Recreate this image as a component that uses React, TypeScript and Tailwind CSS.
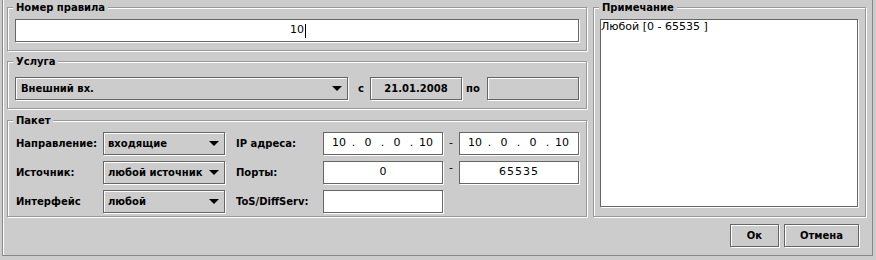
import React from "react";

const boxWhite = "border border-[#666666] bg-white shadow-[1px_1px_0_#ffffff]";
const boxGray =
  "border border-[#666666] bg-[#cccccc] shadow-[1px_1px_0_#ffffff,inset_1px_1px_0_#ffffff]";

function Group({
  title,
  className = "",
  children,
}: {
  title: string;
  className?: string;
  children: React.ReactNode;
}) {
  return (
    <fieldset
      className={
        "min-w-0 border border-[#999999] shadow-[1px_1px_0_#ffffff,inset_1px_1px_0_#ffffff] " +
        className
      }
    >
      <legend className="ml-[5px] px-[3px] bg-[#cccccc] text-[10px] leading-[13px] font-bold">
        {title}
      </legend>
      {children}
    </fieldset>
  );
}

function Arrow() {
  return (
    <svg width="10" height="5" viewBox="0 0 10 5" className="shrink-0">
      <polygon points="0,0 10,0 5,5" fill="#000000" />
    </svg>
  );
}

function Combo({ value, className = "" }: { value: string; className?: string }) {
  return (
    <div
      className={
        boxGray +
        " h-[23px] flex items-center justify-between pl-[4px] pr-[5px] text-[10px] font-bold " +
        className
      }
    >
      <span className="whitespace-nowrap">{value}</span>
      <Arrow />
    </div>
  );
}

function IpField({ parts }: { parts: string[] }) {
  return (
    <div className={boxWhite + " h-[23px] flex items-center pl-[4px] text-[11px]"}>
      {parts.map((p, i) => (
        <React.Fragment key={i}>
          {i > 0 && <span className="w-[7px] text-center">.</span>}
          <span className="w-[22px] text-center">{p}</span>
        </React.Fragment>
      ))}
    </div>
  );
}

function Label({ children, className = "" }: { children: React.ReactNode; className?: string }) {
  return (
    <span className={"text-[10px] font-bold whitespace-nowrap " + className}>{children}</span>
  );
}

export default function App() {
  const ip = ["10", "0", "0", "10"];

  return (
    <div className="w-[876px] h-[260px] bg-[#cccccc] pl-[2px] pr-[3px] text-black font-['DejaVu_Sans',sans-serif]">
      <div className="h-[256px] flex flex-col border-l border-r border-b border-[#888888] shadow-[inset_1px_0_0_#ffffff] pl-[4px] pr-[6px] pt-[1px] pb-[8px]">
        {/* top row: form groups + note */}
        <div className="flex gap-[6px]">
          <div className="w-[580px] flex flex-col">
            <Group title="Номер правила">
              <div className="px-[7px] pt-[5px] pb-[8px]">
                <div className={boxWhite + " h-[23px] flex items-center justify-center text-[11px]"}>
                  <span>10</span>
                  <span className="ml-[1px] -mr-[2px] w-[1px] h-[14px] bg-black" />
                </div>
              </div>
            </Group>

            <Group title="Услуга" className="mt-[4px]">
              <div className="px-[7px] pt-[9px] pb-[8px] flex items-center">
                <Combo value="Внешний вх." className="w-[333px] pl-[5px] pr-[3px]" />
                <Label className="w-[22px] pl-[10px]">с</Label>
                <div className={boxGray + " w-[92px] h-[23px] flex items-center justify-center text-[10px] font-bold"}>
                  21.01.2008
                </div>
                <Label className="w-[25px] pl-[4px]">по</Label>
                <div className={boxGray + " w-[92px] h-[23px]"} />
              </div>
            </Group>

            <Group title="Пакет" className="mt-[5px]">
              <div className="px-[7px] pt-[5px] pb-[3px] grid grid-cols-[88px_122px_98px_120px_16px_120px] gap-y-[6px] items-center">
                <Label className="pl-[1px]">Направление:</Label>
                <Combo value="входящие" />
                <Label className="pl-[11px]">IP адреса:</Label>
                <IpField parts={ip} />
                <span className="text-[11px] text-center">-</span>
                <IpField parts={ip} />

                <Label className="pl-[1px]">Источник:</Label>
                <Combo value="любой источник" />
                <Label className="pl-[11px]">Порты:</Label>
                <div className={boxWhite + " h-[23px] flex items-center justify-center text-[11px]"}>0</div>
                <span className="self-start -mt-[1px] text-[11px] text-center">-</span>
                <div className={boxWhite + " h-[23px] flex items-center justify-center text-[11px] tracking-[1px]"}>
                  65535
                </div>

                <Label className="pl-[1px]">Интерфейс</Label>
                <Combo value="любой" />
                <Label className="pl-[11px]">ToS/DiffServ:</Label>
                <div className={boxWhite + " h-[23px]"} />
              </div>
            </Group>
          </div>

          <Group title="Примечание" className="flex-1 flex flex-col">
            <div className="flex-1 flex flex-col pl-[6px] pr-[7px] pt-[5px] pb-[9px]">
              <div className={boxWhite + " flex-1 text-[11px] leading-[13px]"}>
                Любой [0 - 65535 ]
              </div>
            </div>
          </Group>
        </div>

        {/* buttons */}
        <div className="mt-[7px] flex justify-end gap-[5px] pr-[7px]">
          <button className={boxGray + " w-[49px] h-[23px] text-[10px] font-bold"}>Ок</button>
          <button className={boxGray + " w-[75px] h-[23px] text-[10px] font-bold"}>Отмена</button>
        </div>
      </div>
    </div>
  );
}
